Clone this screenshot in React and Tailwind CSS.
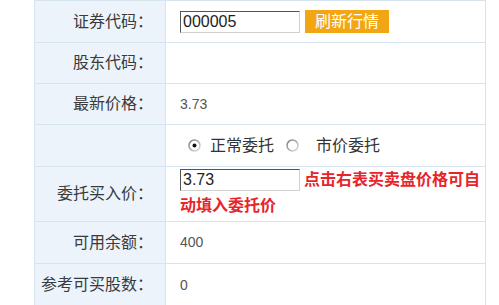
import React from "react";

const font = { fontFamily: '"Liberation Sans", Arial, "Noto Sans CJK SC", sans-serif' };

function Radio({ checked }) {
  return (
    <svg width="13" height="13" viewBox="0 0 13 13" className="shrink-0">
      <defs>
        <linearGradient id={checked ? "rg1" : "rg2"} x1="0" y1="0" x2="1" y2="1">
          <stop offset="0" stopColor="#7a7a7a" />
          <stop offset="1" stopColor="#e2e2e2" />
        </linearGradient>
      </defs>
      <circle cx="6.5" cy="6.5" r="5.5" fill="#fff" stroke={`url(#${checked ? "rg1" : "rg2"})`} strokeWidth="1.5" />
      {checked && <circle cx="6.5" cy="6.5" r="2" fill="#111" />}
    </svg>
  );
}

function Row({ label, h, children, last }) {
  return (
    <div className={`flex ${h} ${last ? "" : "border-b border-[#d6e4ef]"}`}>
      <div className="w-[131px] shrink-0 bg-[#edf3fa] border-r border-[#d6e4ef] flex items-center justify-end pr-[12px] text-[16px] text-[#3a3a3a]">
        {label}
      </div>
      <div className="flex-1 flex items-center pl-[14px] bg-white">{children}</div>
    </div>
  );
}

export default function App() {
  return (
    <div className="w-[499px] h-[305px] bg-white overflow-hidden" style={font}>
      <div className="ml-[34px] w-[452px] border-l border-r border-t border-[#d6e4ef]">
        <Row label="证券代码：" h="h-[42px]">
          <div className="w-[120px] h-[22px] border border-t-[#555] border-l-[#555] border-b-[#d0d0d0] border-r-[#d0d0d0] bg-white flex items-center pl-[2px] text-[16px] text-[#222] leading-none">
            000005
          </div>
          <div className="ml-[5px] w-[84px] h-[23px] bg-[#f3a613] text-white text-[16px] flex items-center justify-center leading-none">
            刷新行情
          </div>
        </Row>
        <Row label="股东代码：" h="h-[41px]" />
        <Row label="最新价格：" h="h-[41px]">
          <span className="text-[14px] text-[#555]">3.73</span>
        </Row>
        <Row label="" h="h-[42px]">
          <div className="flex items-center pl-[8px] text-[16px] text-[#333]">
            <Radio checked />
            <span className="ml-[9px]">正常委托</span>
            <span className="ml-[12px]"><Radio /></span>
            <span className="ml-[17px]">市价委托</span>
          </div>
        </Row>
        <Row label="委托买入价：" h="h-[55px]">
          <div className="text-[16px] leading-[26px] font-bold text-[#e8242a] pr-[4px] -mt-[2px]">
            <span className="inline-block align-top mt-[2px] w-[120px] h-[22px] border border-t-[#555] border-l-[#555] border-b-[#d0d0d0] border-r-[#d0d0d0] bg-white pl-[2px] text-[16px] text-[#222] font-normal leading-[20px] mr-[4px]">
              3.73
            </span>
            点击右表买卖盘价格可自动填入委托价
          </div>
        </Row>
        <Row label="可用余额：" h="h-[42px]">
          <span className="text-[14px] text-[#555]">400</span>
        </Row>
        <Row label="参考可买股数：" h="h-[42px]" last>
          <span className="text-[14px] text-[#555]">0</span>
        </Row>
      </div>
    </div>
  );
}
